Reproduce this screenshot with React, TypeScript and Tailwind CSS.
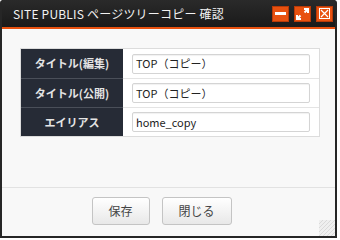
import React from "react";

const rows = [
  { label: "タイトル(編集)", value: "TOP（コピー）" },
  { label: "タイトル(公開)", value: "TOP（コピー）" },
  { label: "エイリアス", value: "home_copy" },
];

const TitleButton = ({ children }: { children: React.ReactNode }) => (
  <div className="flex h-[16px] w-[17px] items-center justify-center border border-[#b83a08] bg-[#e8510f]">
    {children}
  </div>
);

const App = () => {
  return (
    <div className="h-[240px] w-[340px] bg-white font-['Noto_Sans_CJK_JP','Noto_Sans',sans-serif]">
      <div className="relative flex h-[238px] w-[337px] flex-col rounded-t-[3px] border-2 border-t-0 border-[#262626]">
        {/* title bar */}
        <div className="flex h-[29px] items-center justify-between border-b-2 border-[#e8510f] bg-gradient-to-b from-[#2a2a2a] to-[#1a1a1a] pl-[11px] pr-[2px]">
          <span className="text-[12px] leading-none tracking-[0.2px] text-[#f2f2f2]">SITE PUBLIS ページツリーコピー 確認</span>
          <div className="flex gap-[5px]">
            <TitleButton>
              <div className="h-[3px] w-[11px] bg-white" />
            </TitleButton>
            <TitleButton>
              <svg width="13" height="12" viewBox="0 0 13 12">
                <path d="M8 1h4v4M12 1L8.5 4.5M5 11H1V7M1 11L4.5 7.5" stroke="white" strokeWidth="2" fill="none" />
              </svg>
            </TitleButton>
            <TitleButton>
              <svg width="11" height="11" viewBox="0 0 11 11">
                <rect x="0.5" y="0.5" width="10" height="10" stroke="white" fill="none" />
                <path d="M2 2L9 9M9 2L2 9" stroke="white" strokeWidth="1.2" />
              </svg>
            </TitleButton>
          </div>
        </div>

        {/* content */}
        <div className="h-[159px] border-b border-[#e2e2e2] bg-[#f8f8f8] pl-[18px] pr-[15px] pt-[19px]">
          <div className="border border-[#dcdcdc] bg-white">
            {rows.map((row, i) => (
              <div
                key={row.label}
                className={`flex h-[29px] ${i > 0 ? "border-t border-[#e4e4e4]" : ""}`}
              >
                <div
                  className={`flex w-[102px] items-center justify-center bg-[#262b36] text-[11px] font-bold text-[#e4e4e4] ${
                    i > 0 ? "-mt-px border-t border-[#4a4f59]" : ""
                  }`}
                >
                  {row.label}
                </div>
                <div className="flex flex-1 items-center pl-[9px] pr-[9px]">
                  <div className="flex h-[20px] w-full items-center rounded-[2px] border border-[#d4d4d4] bg-white pl-[3px] text-[11px] text-[#222] shadow-[inset_0_1px_1px_rgba(0,0,0,0.06)]">
                    {row.value}
                  </div>
                </div>
              </div>
            ))}
          </div>
        </div>

        {/* footer */}
        <div className="flex flex-1 justify-center gap-[12px] bg-[#f8f8f8] pr-[14px] pt-[9px]">
          <button className="h-[28px] w-[58px] rounded-[3px] border border-[#c4c4c4] bg-gradient-to-b from-white to-[#e8e8e8] text-[12px] text-[#444]">
            保存
          </button>
          <button className="h-[28px] w-[70px] rounded-[3px] border border-[#c4c4c4] bg-gradient-to-b from-white to-[#e8e8e8] text-[12px] text-[#444]">
            閉じる
          </button>
        </div>

        {/* resize grip */}
        <svg className="absolute bottom-0 right-0" width="16" height="16" viewBox="0 0 16 16">
          <rect width="16" height="16" fill="#efefef" />
          <path d="M0 16L16 0M4 16L16 4M8 16L16 8M12 16L16 12M0 12L12 0M0 8L8 0M0 4L4 0" stroke="#dadada" strokeWidth="1" />
        </svg>
      </div>
    </div>
  );
};

export default App;
